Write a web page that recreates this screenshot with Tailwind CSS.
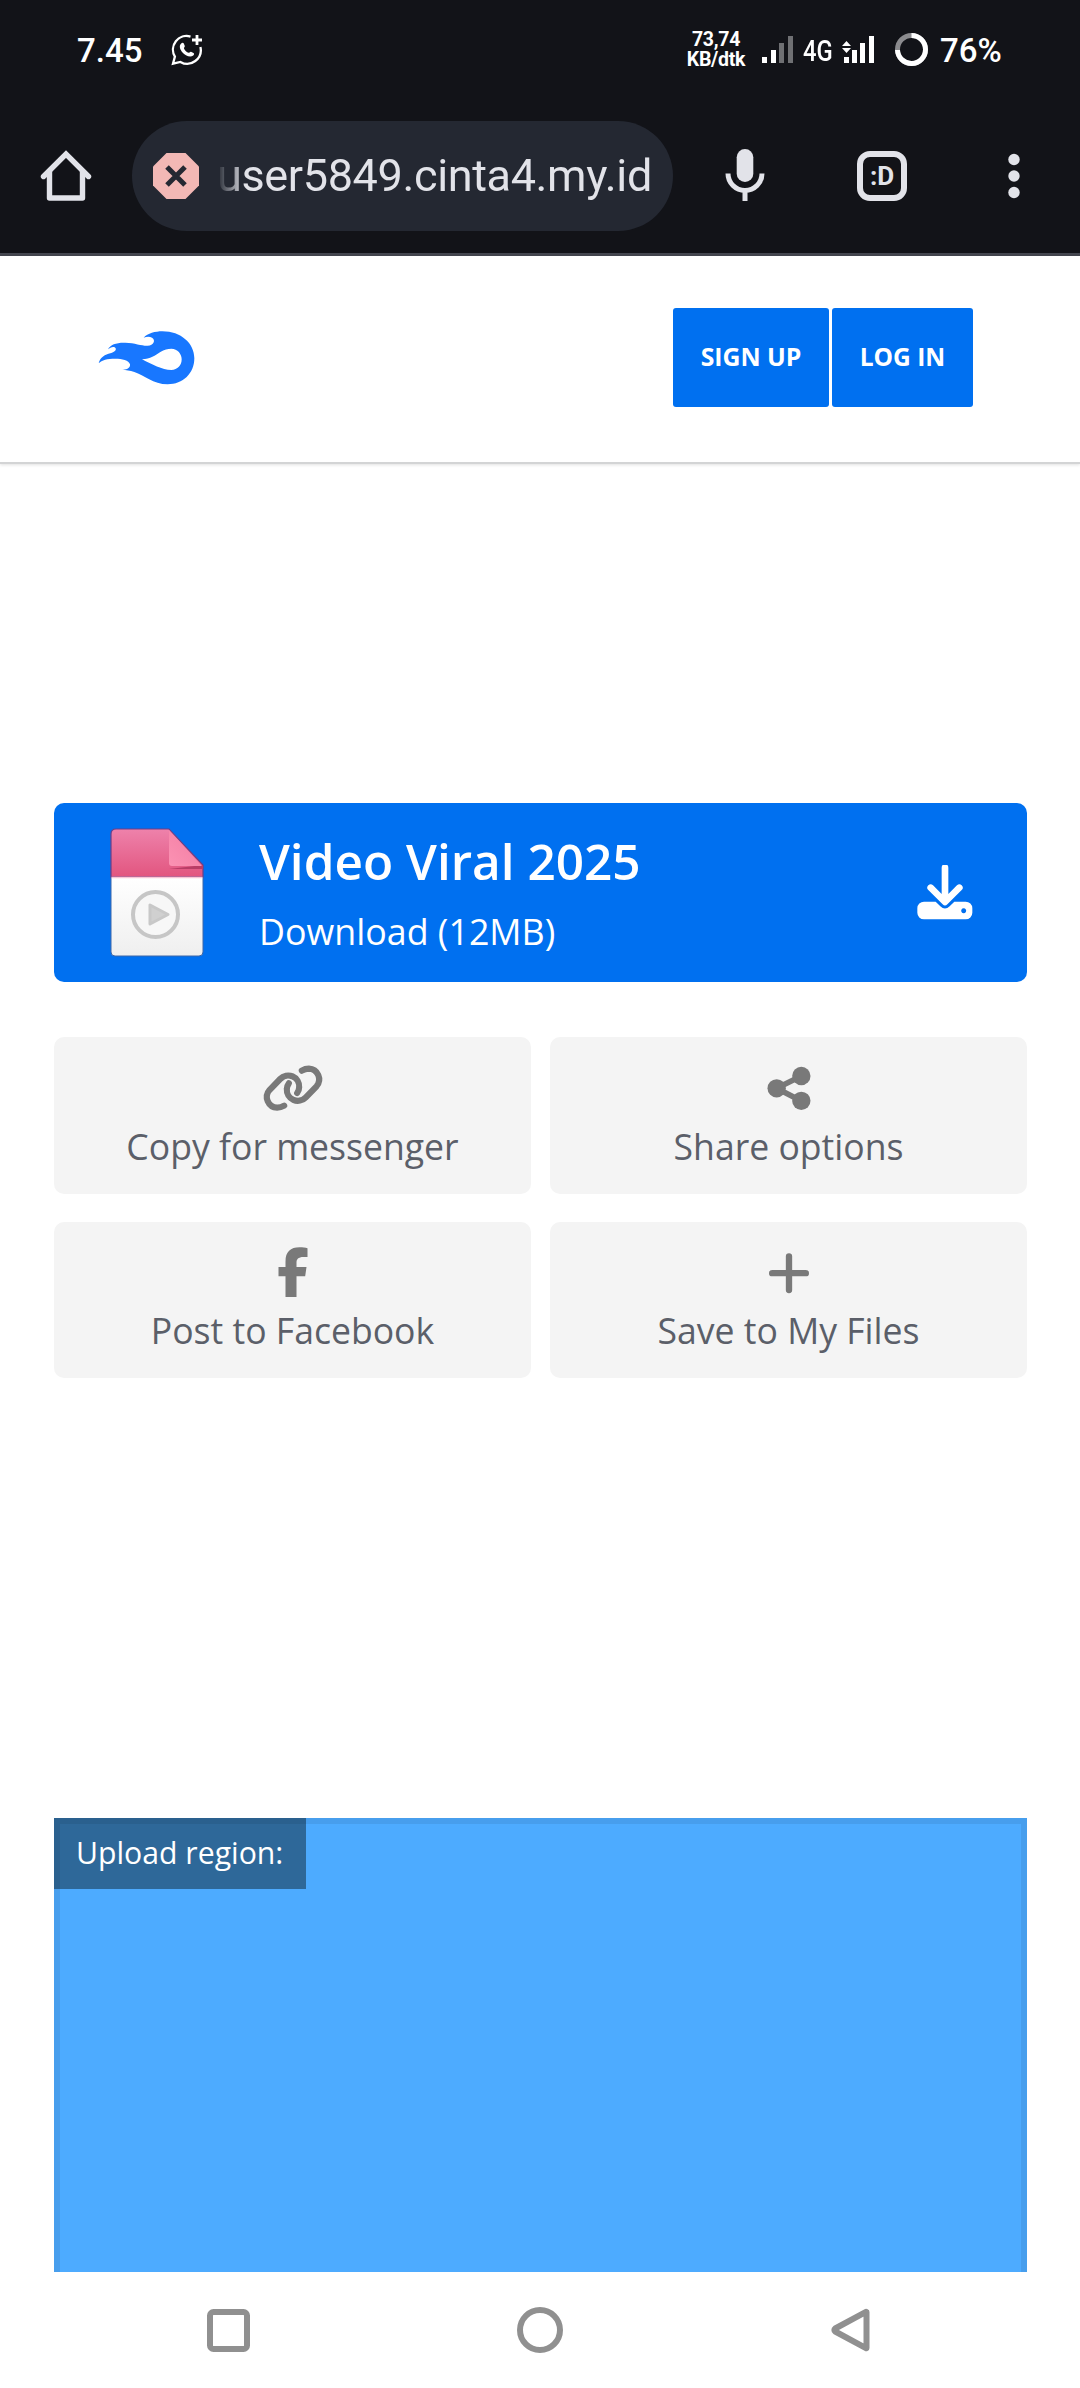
<!DOCTYPE html>
<html lang="id">
<head>
<meta charset="utf-8">
<meta name="viewport" content="width=device-width, initial-scale=1">
<title>Video Viral 2025</title>
<script src="https://cdn.jsdelivr.net/npm/@tailwindcss/browser@4"></script>
</head>
<body class="flex h-[2388px] w-[1080px] flex-col overflow-hidden bg-white font-['Open_Sans',sans-serif]">

<!-- Phone status bar and browser toolbar -->
<header class="h-[256px] shrink-0 border-b-[3px] border-[#44464f] bg-[#121318] font-['Roboto',sans-serif] text-white">
  <div class="flex h-[99px] items-center pr-[76px] pl-[77px] text-[33px] leading-none font-medium">
    <span class="w-[66px] pt-px">7.45</span>
    <svg class="ml-[28px] size-[32px]" viewBox="0 0 32 32" fill="none">
      <path d="M19.500 2.600A13.600 13.600 0 0 0 3.900 22.600L2 29.700l7.400-1.800A13.600 13.600 0 0 0 29.400 13" stroke="#fff" stroke-width="2.300"/>
      <path d="M26 1v10M21 6h10" stroke="#fff" stroke-width="2.800"/>
      <path d="M10.200 9.400c.9-.8 2.200-.8 2.600.2l1 2.500c.3.8-1.100 1.600-.8 2.300.9 2 2.600 3.600 4.700 4.400.7.200 1.500-1.500 2.300-1.100l2.500 1.200c.9.500.6 2-.3 2.700-3.300 2.400-8.300-.4-10.700-3.200-2.200-2.600-4-6.600-1.300-9z" fill="#fff"/>
    </svg>
    <div class="ml-auto flex w-[60px] flex-col items-center text-[19.500px] leading-[20px] font-bold tracking-[-0.3px]"><span>73,74</span><span>KB/dtk</span></div>
    <svg class="ml-[16px] h-[27px] w-[31px]" viewBox="0 0 31 27" fill="#fff"><path d="M0 21h5v6H0zM9 14h5v13H9z"/><path d="M17 7h5v20h-5zM26 0h5v27h-5z" fill="#6f7073"/></svg>
    <span class="ml-[10px] w-[31px]"><span class="inline-block origin-left scale-x-[0.82] text-[29px]">4G</span></span>
    <svg class="ml-[8px] h-[27px] w-[33px]" viewBox="0 0 33 27" fill="#fff"><path d="M2 21h5v6H2zM10 14h5v13h-5zM18 7h5v20h-5zM27 0h5v27h-5zM0 10l4.500-5 4.500 5zM0 12l4.500 5 4.500-5z"/></svg>
    <svg class="ml-[20px] size-[33px]" viewBox="0 0 33 33" fill="none" stroke-width="5"><circle cx="16.500" cy="16.500" r="14" stroke="#8b8b8e"/><path d="M16.500 2.500A14 14 0 1 1 2.500 17" stroke="#fff"/></svg>
    <span class="ml-[12px] w-[64px] pt-px">76%</span>
  </div>

  <div class="flex h-[153px] items-center text-[#e2e3e9]">
    <svg class="ml-[40px] size-[52px]" viewBox="0 0 52 52" fill="none" stroke="currentColor" stroke-width="5.400" stroke-linejoin="round"><path d="M3.500 26.500 26 4l22.500 22.500" stroke-linecap="round" stroke-linejoin="miter"/><path d="M9.500 21v27h33V21"/></svg>
    <div class="ml-[40px] flex h-[110px] w-[541px] items-center rounded-full bg-[#242832] pl-[21px]">
      <svg class="size-[46px] shrink-0" viewBox="0 0 46 46"><path d="M13.500 0h19L46 13.500v19L32.500 46h-19L0 32.500v-19z" fill="#f2b8b5"/><path d="m14 14 18 18m0-18L14 32" stroke="#242832" stroke-width="5"/></svg>
      <span class="ml-[18px] text-[45px] leading-[64px] tracking-[-0.360px] whitespace-nowrap [mask-image:linear-gradient(to_right,transparent,black_28px)]">user5849.cinta4.my.id</span>
    </div>
    <svg class="ml-[52px] h-[54px] w-[40px]" viewBox="0 0 40 54"><rect x="11.700" y="0" width="16.600" height="33" rx="8.300" fill="currentColor"/><path d="M3 24.500a17 17 0 0 0 34 0M20 41v11" fill="none" stroke="currentColor" stroke-width="5"/></svg>
    <div class="ml-[92px] flex size-[50px] items-center justify-center rounded-[13px] border-[6px] border-[#e2e3e9] text-[26px] leading-none font-bold">:D</div>
    <svg class="ml-[101px] h-[46px] w-[12px]" viewBox="0 0 12 46" fill="currentColor"><circle cx="6" cy="6.500" r="5.700"/><circle cx="6" cy="23" r="5.700"/><circle cx="6" cy="39.500" r="5.700"/></svg>
  </div>
</header>

<!-- Site header -->
<nav class="flex h-[208px] shrink-0 items-center justify-between border-b-2 border-[#d3d4d5] pr-[107px] pb-[3px] pl-[97px] shadow-[0_1px_3px_rgba(0,0,0,0.12)]">
  <svg class="h-[56px] w-[100px]" viewBox="110 120 300 168" fill="#1877ff" fill-rule="evenodd"><path d="M115 220C119 202 135 193 150 190C165 186 171 178 163 172C157 169 149 173 143 178C150 163 170 157 195 158C225 159 245 168 262 167C280 166 287 150 275 143C268 139 258 140 250 143C262 130 285 124 306 124C362 124 402 160 402 205C402 250 368 283 322 283C278 283 252 255 222 246C208 241 198 240 185 239C202 240 210 233 209 223C206 210 185 206 165 206C140 206 125 210 115 220ZM245 208C275 223 305 240 333 240C352 240 364 226 364 208C364 191 352 177 333 176C322 176 312 179 300 186C285 196 270 207 245 208Z"/></svg>
  <div class="flex gap-[3px] text-[24.800px] font-bold text-white">
    <a class="flex h-[99px] w-[156px] items-center justify-center rounded-[3px] bg-[#0070f0] pb-px">SIGN UP</a>
    <a class="flex h-[99px] w-[141px] items-center justify-center rounded-[3px] bg-[#0070f0] pb-px text-[24.500px]">LOG IN</a>
  </div>
</nav>

<main class="flex grow flex-col pr-[53px] pl-[54px] pt-[339px]">
  <!-- Download card -->
  <a class="flex h-[179px] shrink-0 items-center rounded-[10px] bg-[#0070f0] pr-[54px] pl-[55px] text-white">
    <svg class="h-[131px] w-[96px]" viewBox="-1 -1 96 131">
      <defs>
        <linearGradient id="pink" x1="0" y1="0" x2="0" y2="1"><stop stop-color="#ee82ab"/><stop offset="1" stop-color="#e2557f"/></linearGradient>
        <linearGradient id="paper" x1="0" y1="0" x2="0" y2="1"><stop stop-color="#fff"/><stop offset="1" stop-color="#efefef"/></linearGradient>
        <linearGradient id="fold" x1="0" y1="1" x2="1" y2="0"><stop stop-color="#fb92b3"/><stop offset="1" stop-color="#f27ba2"/></linearGradient>
      </defs>
      <path d="M1 49h92v75q0 4-4 4H5q-4 0-4-4z" fill="url(#paper)" stroke="#3c66a8" stroke-width="1"/>
      <path d="M1 49V6q0-5 5-5h53l34 36v12z" fill="url(#pink)" stroke="#6b3f86" stroke-width="1.200"/>
      <path d="M1.500 49.500h91" stroke="#f9c6d6" stroke-width="1.500"/>
      <path d="M59 41h34v-4z" fill="#b93d66"/>
      <path d="M59 2v33q0 3 3 3h30z" fill="url(#fold)"/>
      <circle cx="45.500" cy="86.500" r="22.500" fill="#f7f7f7" stroke="#c6c6c6" stroke-width="4"/>
      <path d="M40 77v19l18-9.500z" fill="#d0d0d0" stroke="#c8c8c8" stroke-width="3" stroke-linejoin="round"/>
    </svg>
    <div class="ml-[54px] flex flex-col pt-[6px]">
      <span class="text-[49.500px] leading-[70px] font-semibold">Video Viral 2025</span>
      <span class="text-[35.800px] leading-[70px]">Download (12MB)</span>
    </div>
    <svg class="ml-auto h-[56px] w-[56px]" viewBox="170 224 168 168"><path d="M254 232v100M211 292l43 43 43-43" fill="none" stroke="#fff" stroke-width="20" stroke-linecap="round" stroke-linejoin="round"/><path fill="#fff" fill-rule="evenodd" d="M191 334h35l14 14q14 13 28 0l14-14h34a20 20 0 0 1 20 20v13a20 20 0 0 1-20 20H191a20 20 0 0 1-20-20v-13a20 20 0 0 1 20-20zM310 353.500a7.500 7.500 0 1 0 .1 0z"/></svg>
  </a>

  <!-- Share actions -->
  <div class="mt-[55px] grid grid-cols-[477px_477px] gap-x-[19px] gap-y-[28px] text-[35.600px] leading-[50px] text-[#5b5f69]">
    <a class="flex h-[157px] flex-col items-center rounded-[10px] bg-[#f4f4f4] pt-[20px]">
      <svg class="h-[60px] w-[66px]" viewBox="658.500 81 198 180" fill="none" stroke="#797979" stroke-width="18.500" stroke-linecap="round"><path d="M731 227q-10 6-21 6a32 32 0 0 1-23-53l32-33a33 33 0 0 1 57 25q0 9-6 17"/><path d="M731 227q-10 6-21 6a32 32 0 0 1-23-53l32-33a33 33 0 0 1 57 25q0 9-6 17" transform="rotate(180 757.500 174.500)"/></svg>
      <span class="mt-[4px]">Copy for messenger</span>
    </a>
    <a class="flex h-[157px] flex-col items-center rounded-[10px] bg-[#f4f4f4] pt-[22px]">
      <svg class="h-[60px] w-[66px]" viewBox="647 87 198 180" fill="#797979"><path d="M783 138l-74 37 74 38" fill="none" stroke="#797979" stroke-width="17"/><circle cx="709" cy="175" r="27.500"/><circle cx="783" cy="138" r="27.500"/><circle cx="783" cy="212.500" r="27.500"/></svg>
      <span class="mt-[2px]">Share options</span>
    </a>
    <a class="flex h-[156px] flex-col items-center rounded-[10px] bg-[#f4f4f4] pt-[22px]">
      <svg class="h-[60px] w-[66px]" viewBox="658.500 642 198 180" fill="#797979"><path d="M735 801V739H714V711H735V695C735 665 750 652 777 652C787 652 795 653 801 655V681H789C773 681 768 688 768 698V711H798L794 739H768V801Z"/></svg>
      <span class="mt-px">Post to Facebook</span>
    </a>
    <a class="flex h-[156px] flex-col items-center rounded-[10px] bg-[#f4f4f4] pt-[22px]">
      <svg class="h-[60px] w-[66px]" viewBox="647 642 198 180" fill="none" stroke="#797979" stroke-width="19" stroke-linecap="round"><path d="M746 679v101M695.500 729.500h101"/></svg>
      <span class="mt-px">Save to My Files</span>
    </a>
  </div>

  <!-- Upload region map -->
  <section class="relative mt-[440px] h-[454px] shrink-0 bg-[#4dabff]">
    <div class="flex h-[71px] w-[252px] items-center bg-[#2e6899] pb-[2px] pl-[22px] text-[30.200px] whitespace-nowrap text-white">Upload region:</div>
    <div class="absolute inset-0 border-[6px] border-b-0 border-black/7"></div>
  </section>
</main>

<!-- Android navigation -->
<footer class="flex h-[116px] shrink-0 items-center pl-[207px]">
  <svg class="size-[43px]" viewBox="0 0 43 43" fill="none" stroke="#909090" stroke-width="6"><rect x="3" y="3" width="37" height="37" rx="3.500"/></svg>
  <svg class="ml-[267px] size-[46px]" viewBox="0 0 46 46" fill="none" stroke="#909090" stroke-width="6"><circle cx="23" cy="23" r="20"/></svg>
  <svg class="ml-[268px] h-[44px] w-[39px]" viewBox="0 0 39 44" fill="none" stroke="#909090" stroke-width="6" stroke-linejoin="round"><path d="M35.500 4v36q0 .500-.500.200L4.200 23.500q-1.700-1.500 0-3L35 3.800z"/></svg>
</footer>
</body>
</html>
